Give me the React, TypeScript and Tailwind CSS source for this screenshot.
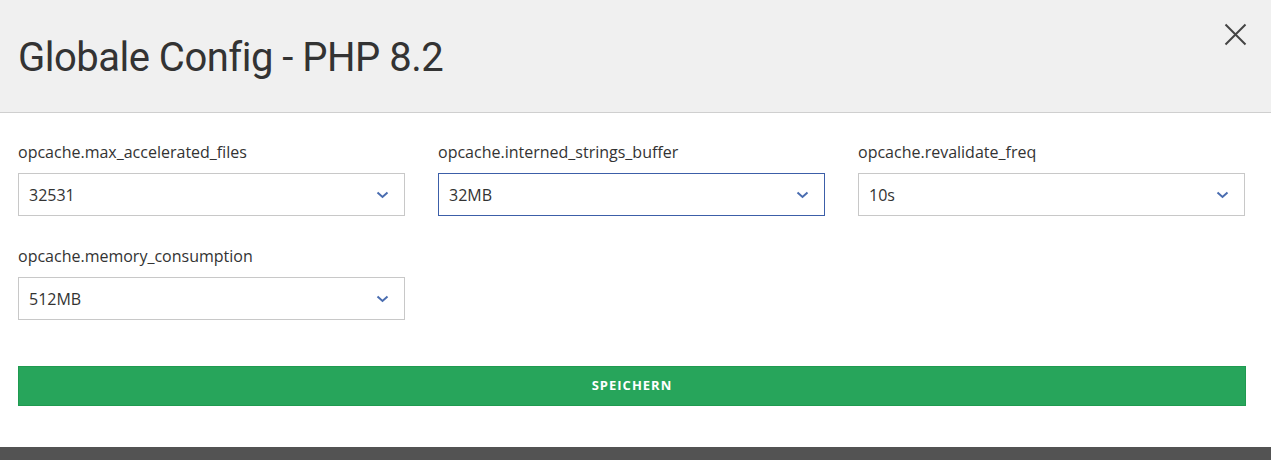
import React from 'react';

const fields = [
  { label: 'opcache.max_accelerated_files', value: '32531', focused: false },
  { label: 'opcache.interned_strings_buffer', value: '32MB', focused: true },
  { label: 'opcache.revalidate_freq', value: '10s', focused: false },
  { label: 'opcache.memory_consumption', value: '512MB', focused: false },
];

function Chevron() {
  return (
    <svg width="13" height="8" viewBox="0 0 13 8" fill="none">
      <path d="M1.5 1.5 L6.5 6 L11.5 1.5" stroke="#4a6db0" strokeWidth="2" />
    </svg>
  );
}

export default function App() {
  return (
    <div className="w-[1271px] h-[460px] bg-white flex flex-col text-[#333]" style={{ fontFamily: '"Open Sans", sans-serif' }}>
      <div className="h-[113px] shrink-0 bg-[#f0f0f0] border-b border-[#cfcfcf] flex items-start justify-between pl-[18px] pr-[24px]">
        <h1
          className="mt-[30px] text-[40px] leading-[56px] text-[#333] tracking-[-0.5px]"
          style={{ fontFamily: '"Roboto", sans-serif', fontWeight: 400 }}
        >
          Globale Config - PHP 8.2
        </h1>
        <button className="mt-[23px] w-[23px] h-[23px] flex items-center justify-center">
          <svg width="23" height="23" viewBox="0 0 23 23">
            <path d="M1.5 1.5 L21.5 21.5 M21.5 1.5 L1.5 21.5" stroke="#444" strokeWidth="2" />
          </svg>
        </button>
      </div>
      <div className="flex-1 pl-[18px] pr-[26px] pt-[28px]">
        <div className="grid grid-cols-[387px_387px_387px] gap-x-[33px] gap-y-[29px]">
          {fields.map((f) => (
            <div key={f.label} className="flex flex-col">
              <label className="text-[16px] leading-[22px] mb-[10px]">{f.label}</label>
              <div
                className={`h-[43px] flex items-center justify-between pl-[10px] pr-[15px] bg-white border ${
                  f.focused ? 'border-[#3c5ea8]' : 'border-[#c8c8c8]'
                }`}
              >
                <span className="text-[16px]">{f.value}</span>
                <Chevron />
              </div>
            </div>
          ))}
        </div>
        <button className="mt-[46px] w-[1228px] h-[40px] bg-[#27a55b] border border-[#1f9a50] text-white text-[13px] font-bold tracking-[1px] flex items-center justify-center">
          SPEICHERN
        </button>
      </div>
      <div className="h-[13px] shrink-0 bg-[#535353]" />
    </div>
  );
}
